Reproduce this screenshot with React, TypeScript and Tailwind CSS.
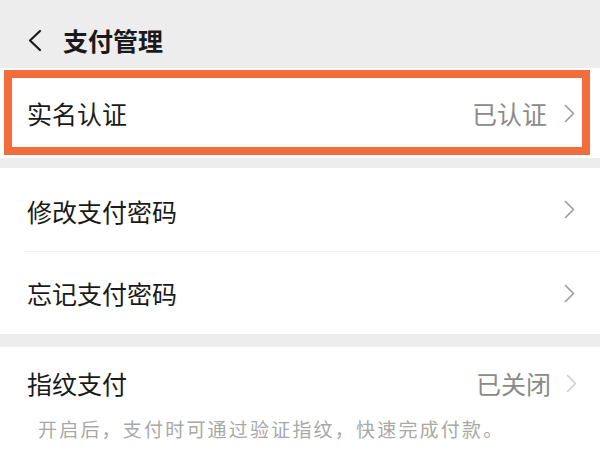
import React from "react";

function Chevron({ light = false }: { light?: boolean }) {
  return (
    <svg
      width="11"
      height="19"
      viewBox="0 0 11 19"
      fill="none"
      stroke={light ? "#cfcfcf" : "#9a9a9a"}
      strokeWidth="1.6"
      strokeLinecap="round"
      strokeLinejoin="round"
    >
      <polyline points="1.5,1.5 9.5,9.5 1.5,17.5" />
    </svg>
  );
}

export default function App() {
  return (
    <div
      className="w-[600px] h-[450px] overflow-hidden bg-[#ededed] text-[#1a1a1a]"
      style={{ fontFamily: '"Noto Sans CJK SC", "Noto Sans", sans-serif' }}
    >
      <div className="h-[68px] flex items-center pt-[12px] pl-[28px]">
        <svg width="15" height="23" viewBox="0 0 15 23" fill="none" stroke="#1a1a1a" strokeWidth="2.2" strokeLinecap="round" strokeLinejoin="round">
          <polyline points="12,2 2,11.5 12,21" />
        </svg>
        <span className="ml-[20px] text-[25px] font-bold leading-none">支付管理</span>
      </div>

      <div className="relative h-[90px] bg-white flex items-center pl-[27px] pr-[25px]">
        <span className="flex-1 text-[25px] leading-none">实名认证</span>
        <span className="text-[25px] leading-none text-[#8a8a8a]">已认证</span>
        <span className="ml-[17px] flex items-center">
          <Chevron />
        </span>
        <div className="absolute left-[4px] right-[10px] top-[2px] bottom-[3px] border-[8px] border-[#f36c3b] pointer-events-none" />
      </div>

      <div className="mt-[10px] bg-white">
        <div className="h-[83px] flex items-center pl-[27px] pr-[25px]">
          <span className="flex-1 text-[25px] leading-none pt-[4px]">修改支付密码</span>
          <Chevron />
        </div>
        <div className="ml-[25px] h-px bg-[#efefef]" />
        <div className="h-[82px] flex items-center pl-[27px] pr-[25px]">
          <span className="flex-1 text-[25px] leading-none">忘记支付密码</span>
          <Chevron />
        </div>
      </div>

      <div className="mt-[13px] bg-white h-[110px]">
        <div className="h-[72px] flex items-center pl-[27px] pr-[23px]">
          <span className="flex-1 text-[25px] leading-none">指纹支付</span>
          <span className="text-[25px] leading-none text-[#8a8a8a]">已关闭</span>
          <span className="ml-[15px] flex items-center">
            <Chevron light />
          </span>
        </div>
        <div className="pl-[38px] text-[19px] leading-none tracking-[2.2px] text-[#a8a8a8]">
          开启后，支付时可通过验证指纹，快速完成付款。
        </div>
      </div>
    </div>
  );
}
